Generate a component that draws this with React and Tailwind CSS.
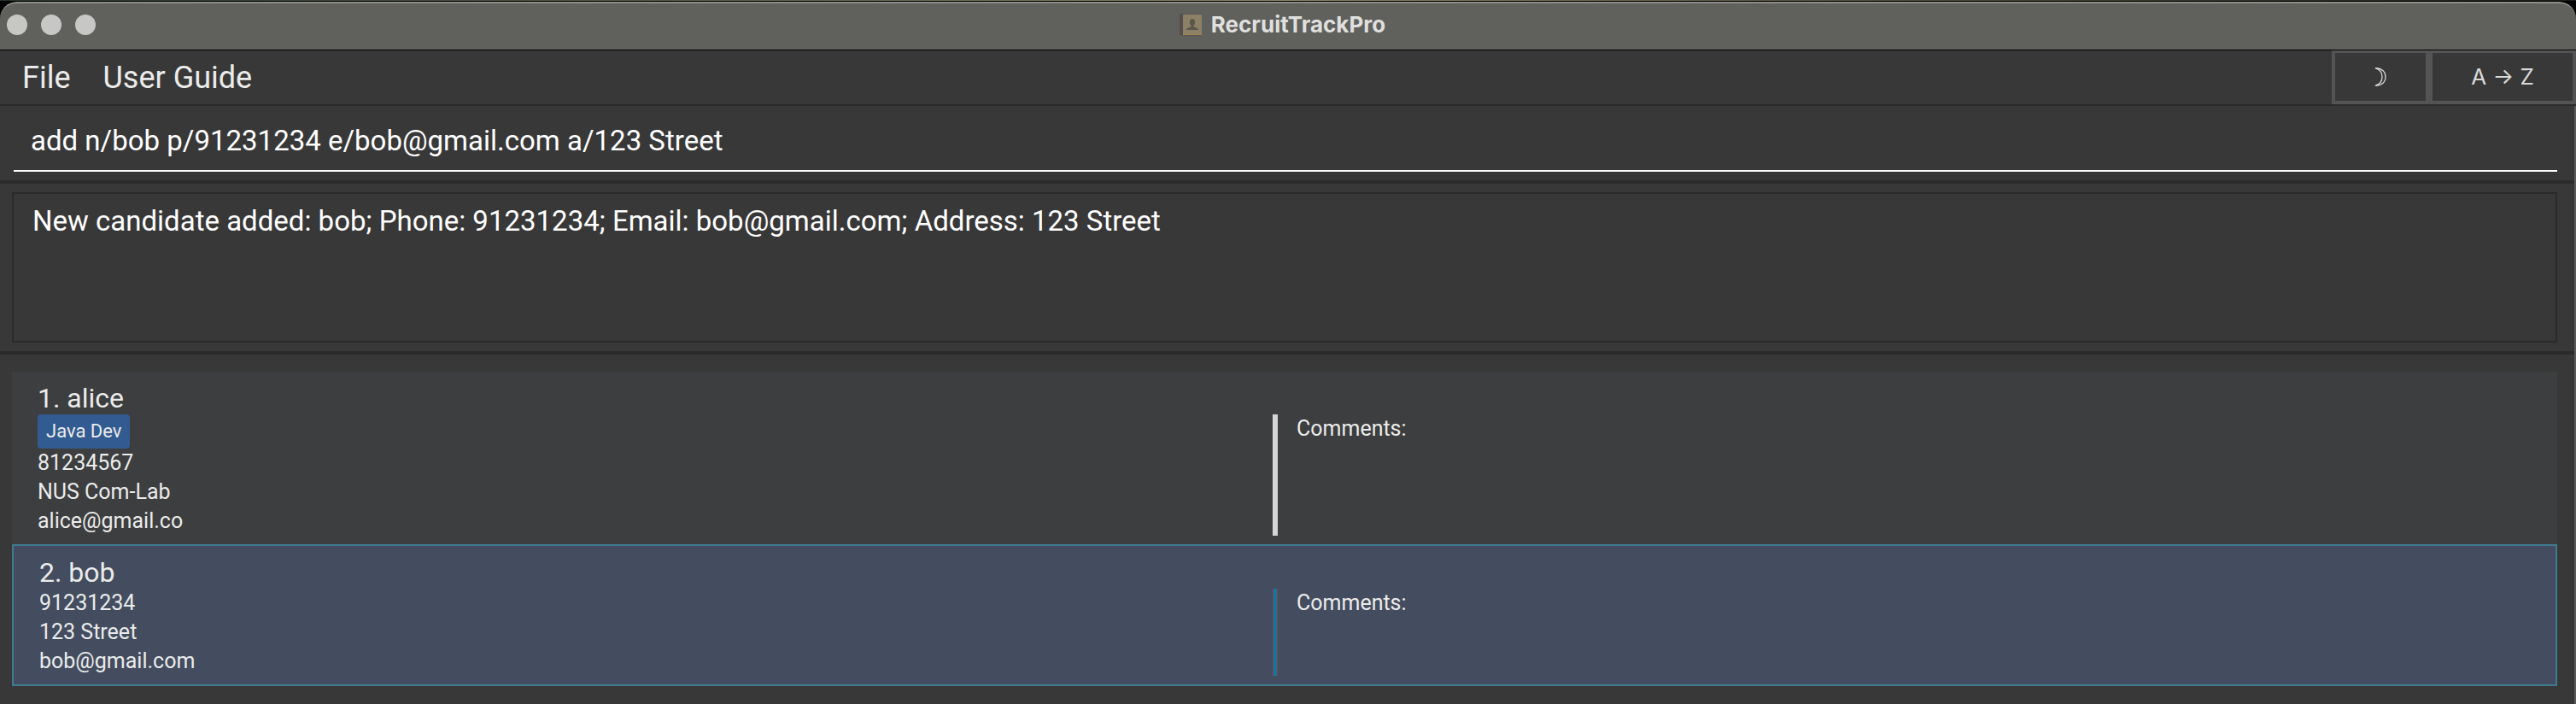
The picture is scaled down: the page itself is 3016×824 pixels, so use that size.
import React from "react";

const candidates = [
  {
    id: 1,
    name: "alice",
    tags: ["Java Dev"],
    phone: "81234567",
    address: "NUS Com-Lab",
    email: "alice@gmail.co",
    selected: false,
  },
  {
    id: 2,
    name: "bob",
    tags: [],
    phone: "91231234",
    address: "123 Street",
    email: "bob@gmail.com",
    selected: true,
  },
];

function AppIcon() {
  return (
    <svg viewBox="0 0 28 28" className="h-7 w-7" aria-hidden="true">
      <rect x="1" y="1" width="26" height="26" rx="2" fill="#5a5650" />
      <rect x="5" y="2" width="22" height="24" rx="1" fill="#8c8066" />
      <rect x="5" y="25" width="22" height="1" fill="#a08658" />
      <rect x="1" y="1" width="4" height="25" rx="1" fill="#55504d" />
      <ellipse cx="16" cy="11" rx="3.2" ry="3.8" fill="#5c554b" />
      <path
        d="M14.500 13h3v3c.5 1.200 5 1 5.500 4H9c.5-3 5-2.800 5.500-4z"
        fill="#5c554b"
      />
    </svg>
  );
}

function TitleBar() {
  return (
    <header className="bg-black">
      <div className="h-px bg-linear-to-r from-[#27352c] via-[#8a8468] to-[#1c1a14]" />
      <div className="relative mt-px flex h-14 items-center justify-center rounded-t-[20px] border-t-2 border-[#8d8e8a] bg-[#60605d] pr-[14px] pb-1">
        <div className="absolute inset-y-0 left-2 flex items-center gap-4 pb-1">
          <button aria-label="Close" className="size-6 rounded-full bg-[#c7c7c5]" />
          <button aria-label="Minimize" className="size-6 rounded-full bg-[#c7c7c5]" />
          <button aria-label="Zoom" className="size-6 rounded-full bg-[#c7c7c5]" />
        </div>
        <div className="flex items-center gap-[10px]">
          <AppIcon />
          <h1 className="font-['Inter',sans-serif] text-[26px] leading-8 font-bold text-[#dfdfdd]">
            RecruitTrackPro
          </h1>
        </div>
      </div>
    </header>
  );
}

function MenuBar() {
  return (
    <nav className="-mr-0.5 flex h-[66px] items-stretch justify-between border-t border-b-2 border-t-black border-b-[#2b2b2b]">
      <div className="flex items-center gap-[38px] pl-[26px] text-[36px] leading-10 text-[#ebebeb]">
        <button>File</button>
        <button>User Guide</button>
      </div>
      <div className="flex font-['Inter',sans-serif] text-[26px] leading-8 text-[#d8d8d8]">
        <button
          aria-label="Toggle dark mode"
          className="flex w-[114px] items-center justify-center border-4 border-t-3 border-[#545454]"
        >
          <svg
            viewBox="0 0 14 22"
            className="h-[22px] w-[14px]"
            fill="none"
            stroke="currentColor"
            strokeWidth="1.3"
            aria-hidden="true"
          >
            <path d="M1 .8C8.500.3 13 5 13 11S8.500 21.700 1 21.200C5.500 20 9 16.500 9 11S5.500 2 1 .8z" />
          </svg>
        </button>
        <button className="flex w-[172px] items-center justify-center border-4 border-t-3 border-[#545454]">
          A → Z
        </button>
      </div>
    </nav>
  );
}

function CandidateRow({ candidate }) {
  const { id, name, tags, phone, address, email, selected } = candidate;
  return (
    <li
      className={
        selected
          ? "border-2 border-[#3e7b91] bg-[#434d5f] px-[30px] pt-3 pb-[10px]"
          : "bg-[#3c3e3f] px-[30px] pt-3 pb-[10px]"
      }
    >
      <h2 className="text-[32px] leading-[38px]">
        {id}. {name}
      </h2>
      <div className="grid grid-cols-2 text-[25px] leading-[34px]">
        <div>
          <div className="flex gap-2">
            {tags.map((tag) => (
              <span
                key={tag}
                className="rounded-sm bg-[#325c91] px-[10px] py-1 text-[22px] leading-8"
              >
                {tag}
              </span>
            ))}
          </div>
          <p>{phone}</p>
          <p>{address}</p>
          <p>{email}</p>
        </div>
        <div className="-ml-[14px] flex gap-[22px]">
          <div
            className={
              selected
                ? "w-[6px] border-x-2 border-[#535a6c] bg-[#0080b0]"
                : "w-[6px] bg-[#d4d6d5]"
            }
          />
          <p>Comments:</p>
        </div>
      </div>
    </li>
  );
}

export default function App() {
  return (
    <div className="min-h-screen bg-[#383838] font-['Roboto',sans-serif] text-[#ebebeb]">
      <TitleBar />
      <div className="min-h-[766px] border-r-2 border-[#5a5a59]">
        <MenuBar />
        <div className="border-b-4 border-[#2b2b2b] pt-3 pr-5 pb-[10px] pl-4">
          <input
            type="text"
            aria-label="Command"
            defaultValue="add n/bob p/91231234 e/bob@gmail.com a/123 Street"
            className="block h-[65px] w-full border-b-2 border-white bg-transparent px-5 pb-[6px] text-[33px] text-white outline-none"
          />
        </div>
        <div className="border-b-4 border-[#2b2b2b] pt-[10px] pr-5 pb-[10px] pl-[14px]">
          <output className="block h-44 border-2 border-[#2b2b2b] px-[22px] py-3 text-[33px] leading-10 text-white">
            New candidate added: bob; Phone: 91231234; Email: bob@gmail.com; Address: 123 Street
          </output>
        </div>
        <ul className="pt-5 pr-5 pb-5 pl-[14px]">
          {candidates.map((candidate) => (
            <CandidateRow key={candidate.id} candidate={candidate} />
          ))}
        </ul>
      </div>
    </div>
  );
}
